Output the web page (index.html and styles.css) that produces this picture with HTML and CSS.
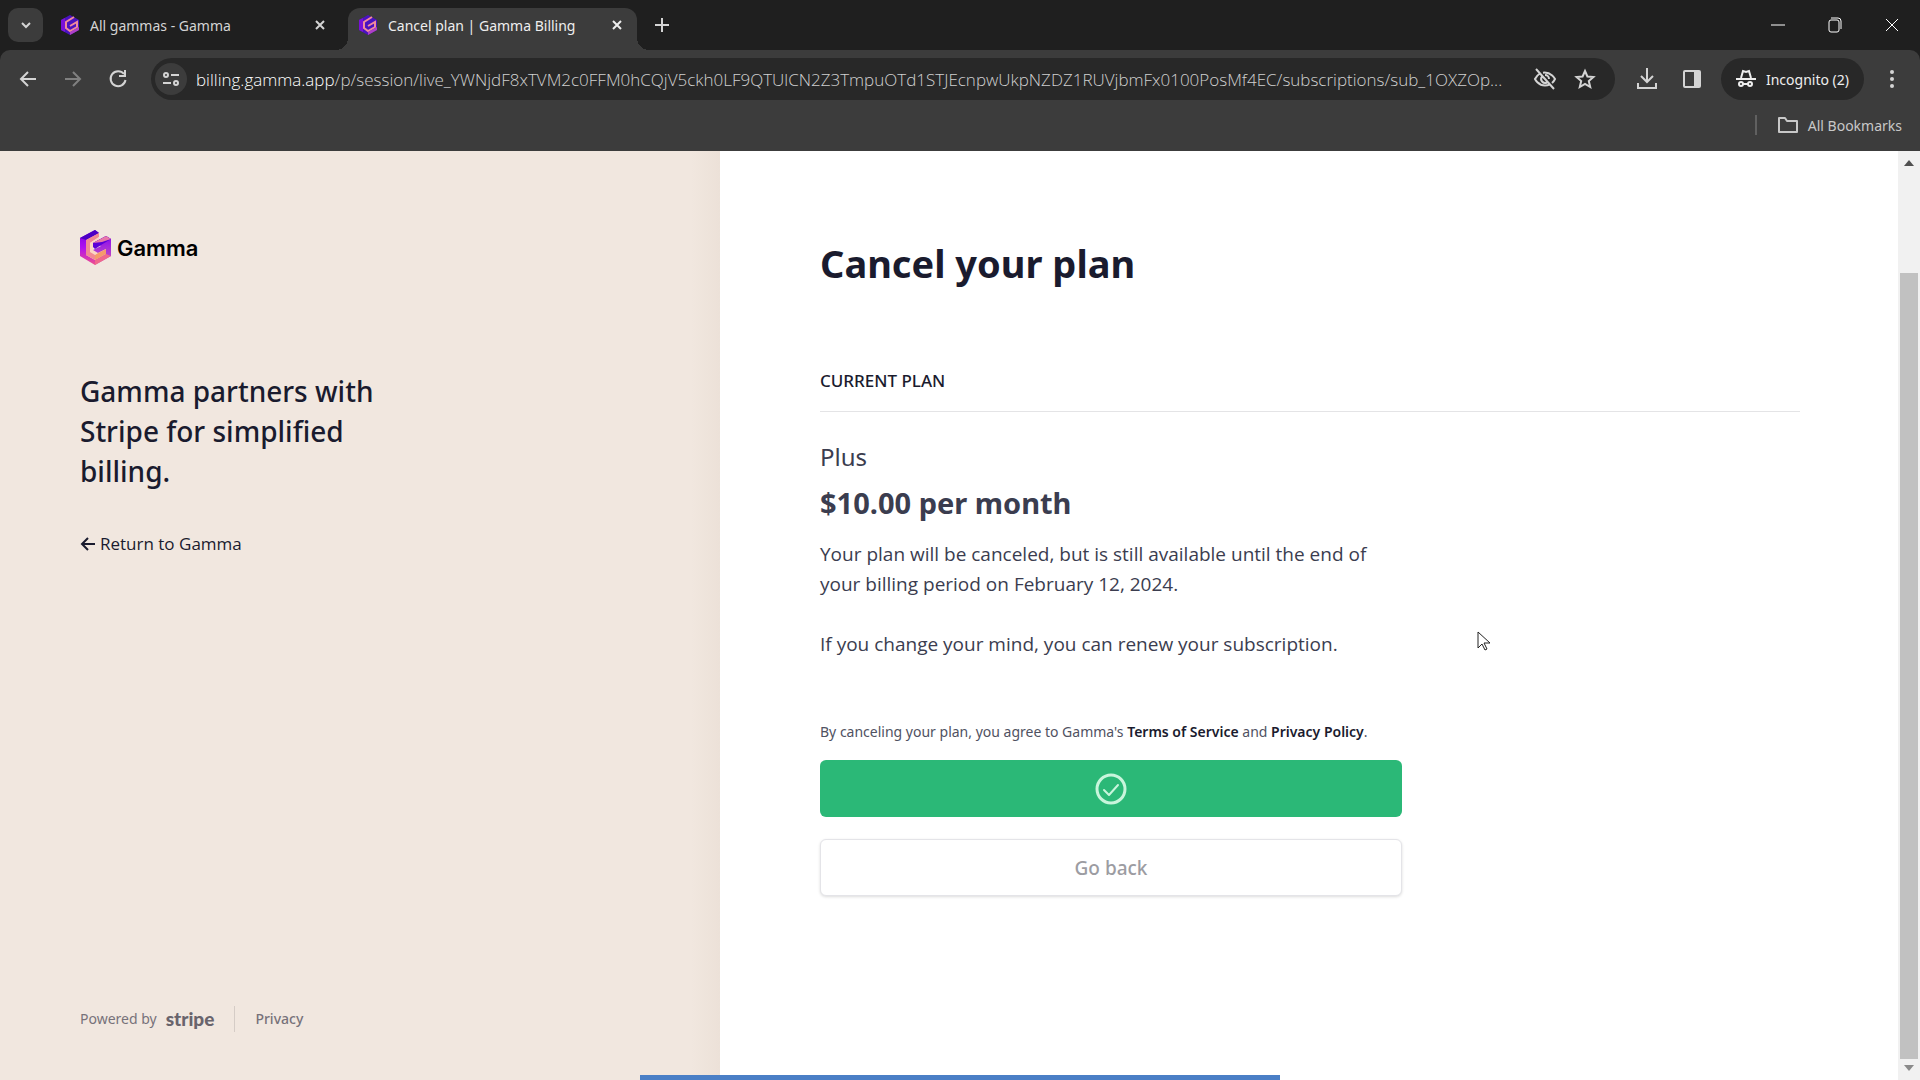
FILE: index.html
```html
<!DOCTYPE html>
<html lang="en">
<head>
    <meta charset="UTF-8">
    <meta name="viewport" content="width=device-width, initial-scale=1.0">
    <title>Cancel plan | Gamma Billing</title>
    <link rel="stylesheet" href="styles.css">
</head>
<body>
    <!-- Shared logo marks -->
    <svg class="sprite" aria-hidden="true">
        <defs>
            <linearGradient id="markBase" x1="0" y1="0" x2="0" y2="1">
                <stop offset="0" stop-color="#7a00e0"/>
                <stop offset="0.5" stop-color="#b010f0"/>
                <stop offset="1" stop-color="#f0508c"/>
            </linearGradient>
            <linearGradient id="markSide" x1="0" y1="0" x2="0" y2="1">
                <stop offset="0" stop-color="#8a08f0"/>
                <stop offset="1" stop-color="#d060b8"/>
            </linearGradient>
        </defs>
        <symbol id="gamma-mark" viewBox="0 0 31 35">
            <path d="M0 8 15 0 19 3 6 10V25L15 30V35L0 26Z" fill="url(#markBase)"/>
            <path d="M15 0 19 3 6 10 0 8Z" fill="#4c00c4"/>
            <path d="M6 10 19 3V7L10 13V21L15 24V30L6 25Z" fill="#f28a94"/>
            <path d="M10 13 19 7V10L13 14V20L18 22 15 25 10 22Z" fill="#fbd6c4"/>
            <path d="M13 13 26 6 31 9V26L15 35V30L26 24V19L18 23 13 20 21 16Z" fill="url(#markSide)"/>
            <path d="M26 6 31 9 21 15 15 19 13 17V13Z" fill="#5a00d8"/>
            <path d="M26 6 31 9 22 12 13 13Z" fill="#e878a8"/>
            <path d="M15 30 26 24 31 26 15 35Z" fill="#f0688c"/>
            <path d="M18 23 26 19V24L15 30V25Z" fill="#f59a6c"/>
        </symbol>
        <symbol id="gamma-favicon" viewBox="0 0 20 20">
            <path d="M10 0 19 5V15L10 20 1 15V5Z" fill="#4a12c0"/>
            <path d="M1 5 5 3V17L1 15Z" fill="#7a10d8"/>
            <path d="M14 2 6 7V13L10 16 17 12V7L10 11" fill="none" stroke="#f08a9c" stroke-width="2"/>
            <path d="M10 20 19 15V12L10 17Z" fill="#b040c8"/>
        </symbol>
    </svg>

    <header class="browser">
        <div class="tab-strip">
            <button class="tab-search" aria-label="Search tabs">
                <svg width="14" height="14" viewBox="0 0 14 14"><path d="m3 5 4 4 4-4" fill="none" stroke="currentColor" stroke-width="2"/></svg>
            </button>
            <div class="tab">
                <svg class="favicon" viewBox="0 0 20 20"><use href="#gamma-favicon"/></svg>
                <span class="tab-title">All gammas - Gamma</span>
                <button class="tab-close" aria-label="Close tab">
                    <svg width="12" height="12" viewBox="0 0 12 12"><path d="m2 2 8 8M10 2l-8 8" stroke="currentColor" stroke-width="2"/></svg>
                </button>
            </div>
            <div class="tab active">
                <svg class="favicon" viewBox="0 0 20 20"><use href="#gamma-favicon"/></svg>
                <span class="tab-title">Cancel plan | Gamma Billing</span>
                <button class="tab-close" aria-label="Close tab">
                    <svg width="12" height="12" viewBox="0 0 12 12"><path d="m2 2 8 8M10 2l-8 8" stroke="currentColor" stroke-width="2"/></svg>
                </button>
            </div>
            <button class="new-tab" aria-label="New tab">
                <svg width="14" height="14" viewBox="0 0 14 14"><path d="M7 0v14M0 7h14" stroke="currentColor" stroke-width="2"/></svg>
            </button>
            <div class="window-controls">
                <button aria-label="Minimize"><svg width="14" height="14" viewBox="0 0 14 14"><path d="M0 7h14" stroke="currentColor" stroke-width="1"/></svg></button>
                <button aria-label="Restore"><svg width="14" height="16" viewBox="0 0 14 16" fill="none" stroke="currentColor"><rect x="1" y="3" width="10" height="12" rx="2"/><path d="M3 1h7a3 3 0 0 1 3 3v8"/></svg></button>
                <button aria-label="Close"><svg width="14" height="14" viewBox="0 0 14 14"><path d="m1 1 12 12M13 1 1 13" stroke="currentColor" stroke-width="1"/></svg></button>
            </div>
        </div>

        <div class="toolbar">
            <button class="nav-button" aria-label="Back">
                <svg width="24" height="24" viewBox="0 0 24 24"><path d="M20 12H5M12 5l-7 7 7 7" fill="none" stroke="currentColor" stroke-width="2"/></svg>
            </button>
            <button class="nav-button" aria-label="Forward" disabled>
                <svg width="24" height="24" viewBox="0 0 24 24"><path d="M4 12h15M12 5l7 7-7 7" fill="none" stroke="currentColor" stroke-width="2"/></svg>
            </button>
            <button class="nav-button" aria-label="Reload">
                <svg width="24" height="24" viewBox="0 0 24 24"><path d="M18 7a7.500 7.500 0 1 0 1.500 6M19 3v6h-6" fill="none" stroke="currentColor" stroke-width="2"/></svg>
            </button>
            <div class="address-bar">
                <button class="site-info" aria-label="View site information">
                    <svg width="18" height="18" viewBox="0 0 18 18" fill="none" stroke="currentColor" stroke-width="2"><circle cx="4" cy="5" r="2"/><path d="M9 5h8M1 13h8"/><circle cx="14" cy="13" r="2"/></svg>
                </button>
                <a class="url" href="#"><span class="host">billing.gamma.app</span>/p/session/live_YWNjdF8xTVM2c0FFM0hCQjV5ckh0LF9QTUlCN2Z3TmpuOTd1STJEcnpwUkpNZDZ1RUVjbmFx0100PosMf4EC/subscriptions/sub_1OXZOp...</a>
                <button class="icon-button" aria-label="Third-party cookies blocked">
                    <svg width="24" height="24" viewBox="0 0 24 24" fill="none" stroke="currentColor" stroke-width="2"><path d="M7 6.500C3.500 8.500 2 12 2 12s3 6.500 10 6.500c2 0 3.500-.5 5-1.200M10 5.700c8.500-1 12 6.300 12 6.300s-1 2.200-3 4M3 2l18 20M9 9.500a4 4 0 0 0 5 6M12 8a4 4 0 0 1 4 4"/></svg>
                </button>
                <button class="icon-button" aria-label="Bookmark this tab">
                    <svg width="24" height="24" viewBox="0 0 24 24"><path d="m12 4 2.400 5.500 6 .5-4.600 4 1.400 6-5.200-3.200L6.800 20l1.400-6-4.600-4 6-.5Z" fill="none" stroke="currentColor" stroke-width="2"/></svg>
                </button>
            </div>
            <button class="tool-button" aria-label="Downloads">
                <svg width="24" height="24" viewBox="0 0 24 24" fill="none" stroke="currentColor" stroke-width="2"><path d="M12 1v14M6 9l6 6 6-6M3 16v5h18v-5"/></svg>
            </button>
            <button class="tool-button" aria-label="Side panel">
                <svg width="20" height="20" viewBox="0 0 20 20"><rect x="2" y="2" width="16" height="16" rx="1" fill="none" stroke="currentColor" stroke-width="2"/><path d="M12 2h6v16h-6z" fill="currentColor"/></svg>
            </button>
            <button class="incognito">
                <svg width="20" height="20" viewBox="0 0 20 20" fill="none" stroke="currentColor" stroke-width="2"><path d="M0 10h20M5 9l2-7 3 1 3-1 2 7"/><circle cx="5" cy="15" r="2"/><circle cx="14" cy="15" r="2"/><path d="M7 15h5"/></svg>
                <span>Incognito (2)</span>
            </button>
            <button class="menu-button" aria-label="Menu">
                <svg width="6" height="20" viewBox="0 0 6 20" fill="currentColor"><circle cx="3" cy="3" r="2"/><circle cx="3" cy="10" r="2"/><circle cx="3" cy="17" r="2"/></svg>
            </button>
        </div>

        <div class="bookmarks-bar">
            <a class="all-bookmarks" href="#">
                <svg width="22" height="18" viewBox="0 0 22 18"><path d="M2 2h6l2 3h10v11H2Z" fill="none" stroke="currentColor" stroke-width="2" stroke-linejoin="round"/></svg>
                All Bookmarks
            </a>
        </div>
    </header>

    <div class="page">
        <aside class="sidebar">
            <div class="brand">
                <svg class="brand-mark" viewBox="0 0 31 35"><use href="#gamma-mark"/></svg>
                <span>Gamma</span>
            </div>
            <h2 class="partner-text">Gamma partners with Stripe for simplified billing.</h2>
            <a class="return-link" href="#">
                <svg width="16" height="16" viewBox="0 0 16 16"><path d="M15 8H2M8 2 2 8l6 6" fill="none" stroke="currentColor" stroke-width="2"/></svg>
                Return to Gamma
            </a>
            <footer class="sidebar-footer">
                <a class="powered" href="#">Powered by <b class="stripe">stripe</b></a>
                <a class="privacy" href="#">Privacy</a>
            </footer>
        </aside>

        <main class="content">
            <h1>Cancel your plan</h1>
            <h3 class="section-title">Current plan</h3>
            <div class="plan">
                <p class="plan-name">Plus</p>
                <p class="plan-price">$10.00 per month</p>
                <p class="plan-note">Your plan will be canceled, but is still available until the end of your billing period on February 12, 2024.</p>
                <p class="plan-note">If you change your mind, you can renew your subscription.</p>
                <p class="terms">By canceling your plan, you agree to Gamma's <a href="#">Terms of Service</a> and <a href="#">Privacy Policy</a>.</p>
                <button class="btn btn-success" aria-label="Plan canceled">
                    <svg width="32" height="32" viewBox="0 0 32 32" fill="none" stroke="currentColor" stroke-linecap="round" stroke-linejoin="round"><circle cx="16" cy="16" r="14" stroke-width="3"/><path d="m9 17 5 5 9-10" stroke-width="2"/></svg>
                </button>
                <button class="btn btn-back">Go back</button>
            </div>
        </main>

        <div class="scrollbar">
            <svg width="10" height="6" viewBox="0 0 10 6"><path d="M5 0l5 6H0z" fill="#505050"/></svg>
            <div class="scroll-thumb"></div>
            <svg width="10" height="6" viewBox="0 0 10 6"><path d="M0 0h10L5 6z" fill="#8a8a8a"/></svg>
        </div>
    </div>

    <div class="bottom-strip"></div>
    <svg class="cursor" width="14" height="21" viewBox="0 0 14 21"><path d="M1 1v16l4-4 3 6 2-1-3-6h6Z" fill="#fff" stroke="#222" stroke-width="1"/></svg>
</body>
</html>
```
FILE: styles.css
```css
* {
    margin: 0;
    padding: 0;
    box-sizing: border-box;
}

body {
    font-family: "Segoe UI", "Noto Sans", "Open Sans", sans-serif;
    height: 100vh;
    display: flex;
    flex-direction: column;
    overflow: hidden;
    color: #1a1b2e;
    background: #fff;
}

button {
    font: inherit;
    color: inherit;
    background: none;
    border: none;
    display: flex;
    align-items: center;
    justify-content: center;
}

a {
    color: inherit;
    text-decoration: none;
}

svg {
    flex-shrink: 0;
}

.sprite {
    position: absolute;
    width: 0;
    height: 0;
}

/* Browser chrome */
.browser {
    background: #1f1f1f;
    color: #d4d4d4;
}

.tab-strip {
    height: 50px;
    padding-left: 8px;
    display: flex;
    align-items: flex-end;
}

.tab-search {
    width: 35px;
    height: 34px;
    margin-bottom: 8px;
    border-radius: 10px;
    background: #3c3c3c;
}

.tab {
    width: 297px;
    height: 42px;
    padding: 0 11px 8px 17px;
    display: flex;
    align-items: center;
    gap: 10px;
    font-size: 14px;
}

.tab.active {
    position: relative;
    width: 289px;
    margin-left: 8px;
    padding-left: 10px;
    border-radius: 12px 12px 0 0;
    background: #3c3c3c;
    color: #eee;
}

/* Curved feet of the active tab */
.tab.active::before,
.tab.active::after {
    content: '';
    position: absolute;
    bottom: 0;
    width: 12px;
    height: 12px;
}

.tab.active::before {
    right: 100%;
    background: radial-gradient(circle at 0 0, transparent 12px, #3c3c3c 12px);
}

.tab.active::after {
    left: 100%;
    background: radial-gradient(circle at 100% 0, transparent 12px, #3c3c3c 12px);
}

.favicon {
    width: 20px;
    height: 20px;
}

.tab-title {
    flex: 1;
    white-space: nowrap;
}

.tab-close {
    width: 18px;
    height: 18px;
}

.new-tab {
    width: 34px;
    height: 34px;
    margin: 0 0 8px 8px;
}

.window-controls {
    margin-left: auto;
    height: 50px;
    display: flex;
    color: #fff;
}

.window-controls button {
    width: 57px;
}

.toolbar {
    padding: 8px 12px 8px 5px;
    display: flex;
    align-items: center;
    border-radius: 10px 10px 0 0;
    background: #3c3c3c;
}

.nav-button {
    width: 45px;
    height: 42px;
}

.nav-button:disabled {
    color: #808080;
}

.address-bar {
    flex: 1;
    min-width: 0;
    height: 42px;
    margin: 0 10px 0 11px;
    padding: 0 10px 0 4px;
    display: flex;
    align-items: center;
    border-radius: 21px;
    background: #282828;
}

.site-info {
    width: 32px;
    height: 32px;
    border-radius: 50%;
    background: #3c3c3c;
}

.url {
    flex: 1;
    min-width: 0;
    margin: 0 0 0 9px;
    overflow: hidden;
    white-space: nowrap;
    font-family: "Segoe UI", "Open Sans", sans-serif;
    font-size: 17px;
    font-weight: 300;
    color: #d0d0d0;
}

.host {
    color: #fff;
}

.icon-button {
    width: 40px;
    height: 40px;
}

.tool-button {
    width: 45px;
    height: 40px;
}

.incognito {
    height: 42px;
    margin-left: 6px;
    padding: 0 15px;
    gap: 10px;
    border-radius: 21px;
    background: #282828;
    color: #eee;
    font-size: 14px;
}

.menu-button {
    width: 32px;
    height: 40px;
    margin-left: 12px;
}

.bookmarks-bar {
    height: 43px;
    padding: 7px 18px;
    display: flex;
    justify-content: flex-end;
    align-items: flex-start;
    background: #3c3c3c;
}

.all-bookmarks {
    height: 20px;
    padding-left: 20px;
    display: flex;
    align-items: center;
    gap: 9px;
    border-left: 2px solid #606060;
    font-size: 14px;
    color: #c8c8c8;
}

/* Billing page */
.page {
    flex: 1;
    min-height: 0;
    display: grid;
    grid-template-columns: 37.5% 1fr 22px;
}

.sidebar {
    padding: 79px 80px 48px;
    display: flex;
    flex-direction: column;
    align-items: flex-start;
    background: linear-gradient(90deg, #f1e7df 96%, #ece1d8);
}

.brand {
    display: flex;
    align-items: center;
    gap: 6px;
    height: 35px;
    font-family: Inter, sans-serif;
    font-size: 22px;
    font-weight: 600;
    color: #000;
}

.brand-mark {
    width: 31px;
    height: 35px;
}

.partner-text {
    max-width: 320px;
    margin-top: 106px;
    font-size: 28px;
    font-weight: 500;
    line-height: 40px;
}

.return-link {
    margin-top: 40px;
    display: flex;
    align-items: center;
    gap: 4px;
    font-family: "Segoe UI", "Open Sans", sans-serif;
    font-size: 17px;
    font-weight: 500;
    line-height: 26px;
}

.sidebar-footer {
    margin-top: auto;
    display: flex;
    align-items: center;
    font-size: 14px;
    line-height: 26px;
    color: #77727a;
}

.powered {
    display: flex;
    align-items: center;
    gap: 9px;
    padding-right: 20px;
    border-right: 1px solid #d5ccc6;
}

.stripe {
    font-family: Lato, sans-serif;
    font-size: 19px;
    font-weight: 900;
    color: #69646c;
}

.privacy {
    padding-left: 20px;
    font-weight: 500;
}

.content {
    padding: 84px 98px 0 100px;
}

.content h1 {
    font-size: 38px;
    font-weight: 700;
    line-height: 56px;
}

.section-title {
    margin-top: 77px;
    padding-bottom: 17px;
    border-bottom: 1px solid #e4e4e6;
    font-size: 17px;
    font-weight: 500;
    line-height: 26px;
    text-transform: uppercase;
}

.plan {
    max-width: 582px;
    padding-top: 29px;
    color: #3b3d4f;
}

.plan-name {
    font-size: 24px;
    line-height: 32px;
}

.plan-price {
    margin-top: 12px;
    font-size: 29px;
    font-weight: 700;
    line-height: 36px;
}

.plan-note {
    margin: 18px 0 30px;
    font-family: "Segoe UI", "Open Sans", sans-serif;
    font-size: 19px;
    line-height: 30px;
}

.terms {
    margin-top: 61px;
    font-size: 14px;
    line-height: 24px;
    color: #505262;
}

.terms a {
    font-weight: 600;
    color: #1a1b2e;
}

.btn {
    width: 100%;
    height: 57px;
    border-radius: 6px;
    font-size: 19px;
    font-weight: 500;
}

.btn-success {
    margin-top: 16px;
    background: #2bb877;
    color: #c8f5dc;
}

.btn-back {
    margin-top: 22px;
    border: 1px solid #e4e4e8;
    box-shadow: 0 1px 3px rgba(0, 0, 0, 0.14);
    background: #fff;
    color: #9c9ca2;
}

.scrollbar {
    padding: 9px 2px;
    display: flex;
    flex-direction: column;
    align-items: center;
    background: #f1f1f1;
}

.scroll-thumb {
    flex: 1;
    width: 100%;
    margin: 107px 0 6px;
    background: #c1c1c1;
}

/* Overlays */
.bottom-strip {
    position: absolute;
    left: 640px;
    bottom: 0;
    width: 640px;
    height: 5px;
    background: #4a7fc6;
}

.cursor {
    position: absolute;
    left: 1477px;
    top: 631px;
}
```
